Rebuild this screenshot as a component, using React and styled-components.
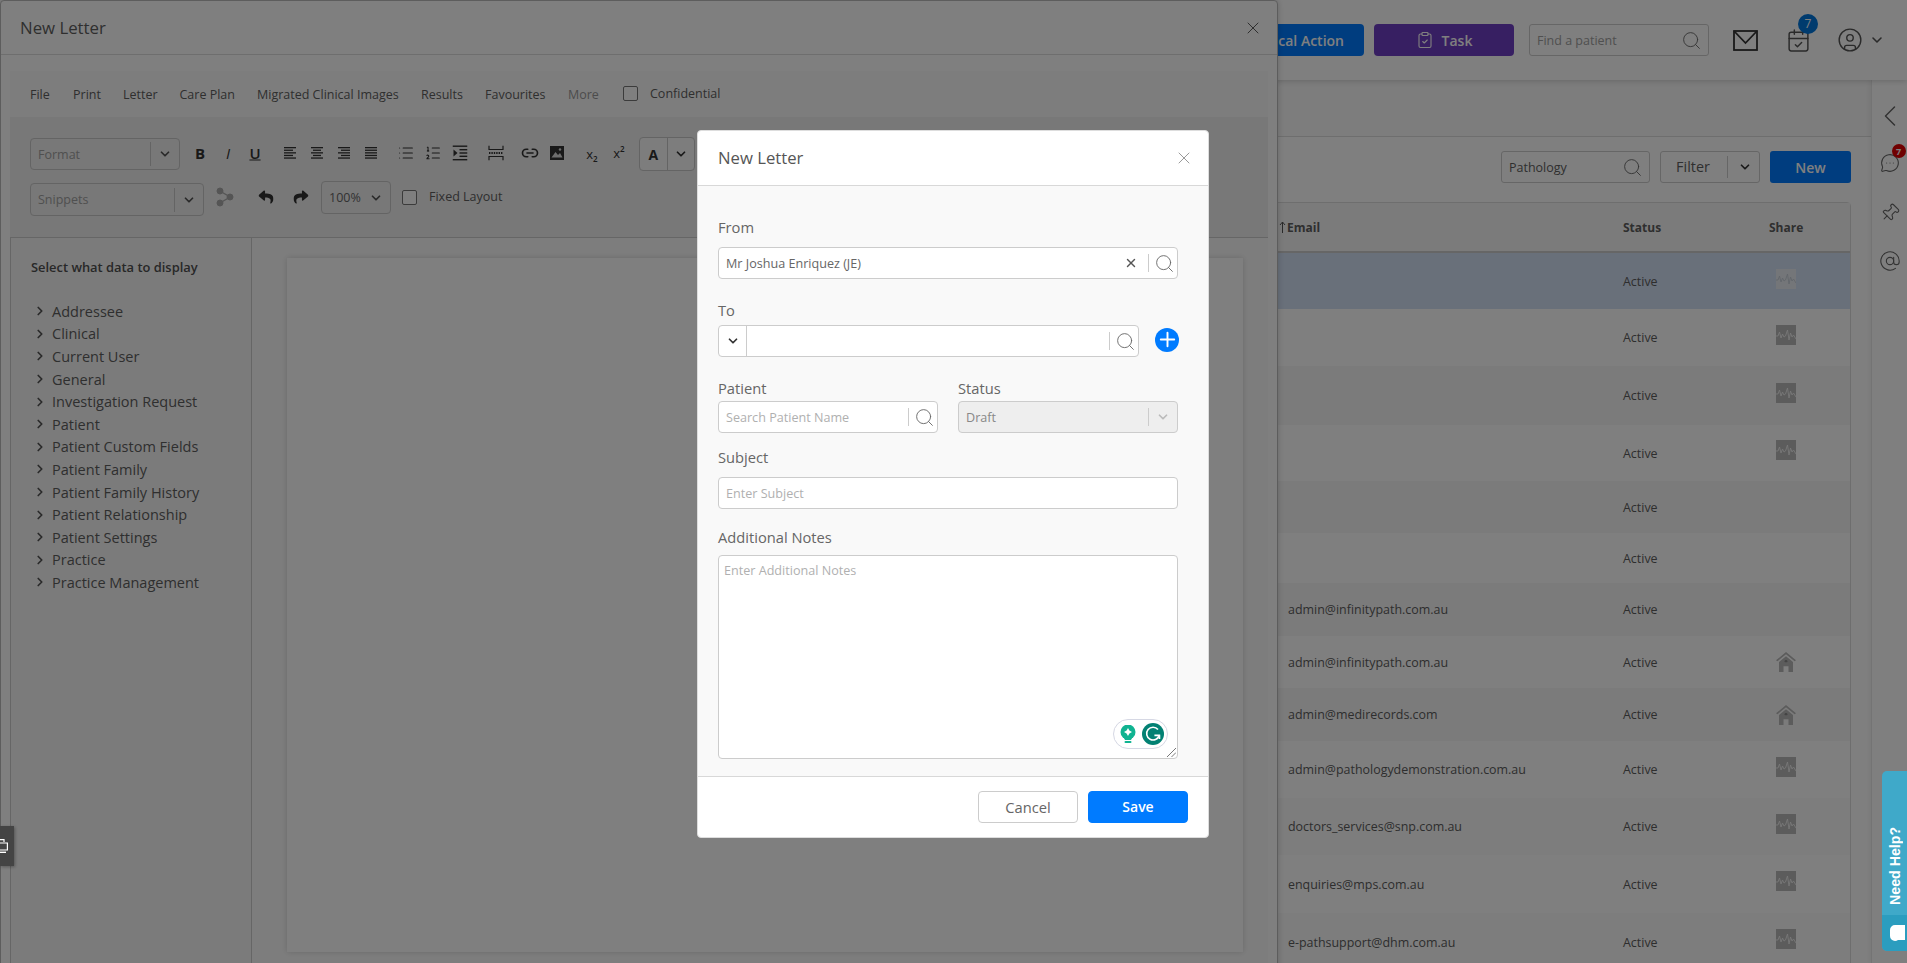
import React from 'react';
import styled, { createGlobalStyle } from 'styled-components';
import {
  Search, X, ChevronDown, ChevronRight, ChevronLeft, List, ListOrdered, Link2, Plus,
  ClipboardCheck, CalendarCheck, CircleUser, MessageCircleMore, Pin, AtSign,
} from 'lucide-react';
import { FaReply, FaShare } from 'react-icons/fa';

const GlobalStyle = createGlobalStyle`
  html, body { margin: 0; padding: 0; }
  body { font-family: "Open Sans", "Noto Sans", sans-serif; color: #666; }
  * { box-sizing: border-box; }
`;

const Page = styled.div`
  position: relative;
  width: 1907px;
  height: 963px;
  overflow: hidden;
  background: #fff;
`;

/* ---------- page behind the dialogs ---------- */
const TopBar = styled.div`
  position: absolute;
  top: 0;
  left: 0;
  right: 0;
  height: 80px;
  display: flex;
  align-items: center;
  padding-left: 1224px;
  background: #fff;
  box-shadow: 0 1px 6px rgba(0, 0, 0, 0.18);
  z-index: 2;
`;

const TopButton = styled.div`
  width: 140px;
  height: 32px;
  margin-left: ${(p) => p.$ml || 0}px;
  display: flex;
  align-items: center;
  justify-content: ${(p) => (p.$end ? 'flex-end' : 'center')};
  gap: 8px;
  padding-right: ${(p) => (p.$end ? 20 : 0)}px;
  border-radius: 4px;
  background: ${(p) => p.$bg};
  color: #fff;
  font-size: 14px;
  font-weight: 600;
`;

const FindBox = styled.div`
  width: ${(p) => p.$w}px;
  height: 32px;
  margin-left: ${(p) => p.$ml || 0}px;
  display: flex;
  align-items: center;
  justify-content: space-between;
  padding: 0 6px 0 7px;
  border: 1px solid #ccc;
  border-radius: 3px;
  background: #fff;
  font-size: 12.5px;
  color: ${(p) => p.$color || '#a0a0a0'};
`;

const TopIcon = styled.div`
  position: relative;
  display: flex;
  margin-left: ${(p) => p.$ml}px;
  color: #555;
`;

const CountBadge = styled.span`
  position: absolute;
  top: -14px;
  left: 12px;
  width: 20px;
  height: 20px;
  display: flex;
  align-items: center;
  justify-content: center;
  border-radius: 50%;
  background: #0076dd;
  color: #fff;
  font-size: 12px;
`;

const SubBar = styled.div`
  position: absolute;
  top: 80px;
  left: 0;
  width: 1871px;
  height: 57px;
  border-bottom: 1px solid #ddd;
  background: #fafafa;
`;

const SideRail = styled.div`
  position: absolute;
  top: 80px;
  right: 0;
  bottom: 0;
  width: 36px;
  display: flex;
  flex-direction: column;
  align-items: center;
  padding-top: 18px;
  background: #fff;
  border-left: 1px solid #e8e8e8;
  box-shadow: -2px 0 4px rgba(0, 0, 0, 0.05);
  color: #666;
`;

const RailIcon = styled.div`
  position: relative;
  display: flex;
  margin-top: ${(p) => p.$mt}px;
`;

const PinGlyph = styled(Pin)`
  transform: rotate(45deg);
`;

const RailBadge = styled.span`
  position: absolute;
  top: -9px;
  right: -6px;
  width: 14px;
  height: 14px;
  display: flex;
  align-items: center;
  justify-content: center;
  border-radius: 50%;
  background: #e00000;
  color: #fff;
  font-size: 9px;
  font-weight: 700;
`;

const ListActions = styled.div`
  position: absolute;
  top: 151px;
  left: 1501px;
  display: flex;
  height: 32px;
`;

const FilterButton = styled.div`
  width: 100px;
  height: 32px;
  margin-left: 10px;
  display: flex;
  align-items: center;
  border: 1px solid #ccc;
  border-radius: 3px;
  background: #fff;
  color: #5e5e5e;
  font-size: 14.4px;
  font-weight: 500;
`;

const FilterLabel = styled.span`
  width: 67px;
  height: 22px;
  line-height: 22px;
  text-align: center;
  border-right: 1px solid #ccc;
  padding-right: 2px;
  flex: none;
  margin-right: 2px;
`;

const FilterCaret = styled.span`
  flex: 1;
  display: flex;
  justify-content: center;
  color: #333;
`;

const NewButton = styled.div`
  width: 81px;
  margin-left: 10px;
  display: flex;
  align-items: center;
  justify-content: center;
  border-radius: 3px;
  background: #007bff;
  color: #fff;
  font-size: 14px;
  font-weight: 600;
`;

const Table = styled.div`
  position: absolute;
  top: 202px;
  left: 1100px;
  width: 751px;
  height: 780px;
  border: 1px solid #ddd;
  border-radius: 4px 4px 0 0;
  background: #fff;
`;

const Row = styled.div`
  display: grid;
  grid-template-columns: 522px 146px 1fr;
  align-items: center;
  height: ${(p) => p.$h}px;
  background: ${(p) => p.$bg || '#fff'};
  font-size: 12.45px;
  color: #5c5c5c;
`;

const HeaderRow = styled(Row)`
  border-bottom: 2px solid #ccc;
  font-size: 12px;
  font-weight: 700;
  background: #f7f7f7;
  color: #5e5e5e;
`;

const EmailCell = styled.div`
  padding-left: ${(p) => p.$pad || 187}px;
  display: flex;
  align-items: center;
  gap: 1px;
`;

const ShareCell = styled.div`
  display: flex;
  padding-left: 7px;
  transform: translateY(${(p) => p.$dy || 0}px);
`;

/* ---------- big New Letter dialog ---------- */
const LetterDialog = styled.div`
  position: absolute;
  top: 0;
  left: 0;
  width: 1278px;
  height: 980px;
  border: 1px solid #bbb;
  border-radius: 4px;
  background: #fff;
  box-shadow: 0 0 6px rgba(0, 0, 0, 0.2);
  z-index: 5;
`;

const DialogHeader = styled.div`
  height: 54px;
  display: flex;
  align-items: center;
  justify-content: space-between;
  padding: 0 14px 0 19px;
  border-bottom: 1px solid #ddd;
  font-size: 16.8px;
  color: #5e5e5e;
`;

const MenuBar = styled.div`
  position: absolute;
  top: 70px;
  left: 9px;
  width: 1258px;
  height: 46px;
  background: #fbfbfb;
  display: flex;
  align-items: center;
  font-size: 12.5px;
  color: #5e5e5e;
`;

const MenuItem = styled.span`
  position: absolute;
  left: ${(p) => p.$x - 10}px;
  margin-top: ${(p) => p.$dy || 0}px;
  color: ${(p) => (p.$muted ? '#999' : 'inherit')};
`;

const Box = styled.span`
  position: absolute;
  left: ${(p) => p.$x}px;
  top: ${(p) => p.$y}px;
  width: 15px;
  height: 15px;
  border: 1px solid #777;
  border-radius: 2px;
  background: #fff;
`;

const Toolbar = styled.div`
  position: absolute;
  top: 116px;
  left: 9px;
  width: 1258px;
  height: 120px;
  background: #f0f0f0;
`;

const ToolSelect = styled.div`
  position: absolute;
  left: ${(p) => p.$x - 10}px;
  top: ${(p) => p.$y}px;
  width: ${(p) => p.$w}px;
  height: ${(p) => p.$h}px;
  display: flex;
  align-items: center;
  justify-content: space-between;
  border: 1px solid #c8c8c8;
  border-radius: 4px;
  padding-left: 7px;
  font-size: 12.5px;
  color: ${(p) => p.$color || '#a0a0a0'};
`;

const CaretPart = styled.span`
  width: 29px;
  height: 24px;
  display: flex;
  align-items: center;
  justify-content: center;
  border-left: ${(p) => (p.$plain ? '0' : '1px solid #c8c8c8')};
  color: #555;
`;

const ToolIcon = styled.span`
  position: absolute;
  left: ${(p) => p.$x - 10}px;
  top: ${(p) => p.$y}px;
  transform: translate(-50%, -50%);
  display: flex;
  color: ${(p) => p.$color || '#333'};
  font-size: ${(p) => p.$size || 15}px;
  font-weight: ${(p) => p.$weight || 400};
  font-style: ${(p) => (p.$italic ? 'italic' : 'normal')};
  text-decoration: ${(p) => (p.$under ? 'underline' : 'none')};
  font-family: "Open Sans", sans-serif;
  line-height: 1;
  sub, sup { font-size: 8px; font-weight: 600; line-height: 0; }
`;

const ColorGroup = styled.div`
  position: absolute;
  left: 629px;
  top: 20px;
  width: 56px;
  height: 34px;
  display: flex;
  border: 1px solid #c8c8c8;
  border-radius: 4px;
  background: #fafafa;
`;

const ColorPart = styled.span`
  flex: 1;
  display: flex;
  align-items: center;
  justify-content: center;
  font-size: 14px;
  font-weight: 700;
  color: #333;
  border-right: ${(p) => (p.$split ? '1px solid #c8c8c8' : '0')};
`;

const FixedLabel = styled.span`
  position: absolute;
  left: 419px;
  top: 71px;
  font-size: 12.5px;
  line-height: 18px;
  color: #5e5e5e;
`;

const DataPanel = styled.div`
  position: absolute;
  top: 236px;
  left: 9px;
  width: 242px;
  height: 740px;
  border: 1px solid #ccc;
  border-width: 1px 1px 0 1px;
  background: #f7f7f7;
  padding: 20px 0 0 20px;
`;

const PanelTitle = styled.div`
  font-size: 12.9px;
  font-weight: 600;
  line-height: 18px;
  margin-bottom: 24px;
  color: #505050;
`;

const TreeRow = styled.div`
  display: flex;
  align-items: center;
  height: 22.6px;
  padding-left: 2px;
  gap: 5px;
  font-size: 14.5px;
  color: #5e5e5e;
`;

const EditorArea = styled.div`
  position: absolute;
  top: 236px;
  left: 251px;
  width: 1016px;
  height: 740px;
  border-top: 1px solid #ccc;
  background: #fbfbfb;
`;

const EditorPaper = styled.div`
  position: absolute;
  top: 20px;
  left: 35px;
  width: 956px;
  height: 694px;
  background: #fff;
  box-shadow: 0 0 6px rgba(0, 0, 0, 0.16);
`;

const Overlay = styled.div`
  position: absolute;
  inset: 0;
  background: rgba(0, 0, 0, 0.5);
  z-index: 10;
`;

/* ---------- small modal ---------- */
const Modal = styled.div`
  position: absolute;
  top: 130px;
  left: 697px;
  width: 512px;
  height: 708px;
  display: flex;
  flex-direction: column;
  border-radius: 4px;
  border: 1px solid #ddd;
  background: #fff;
  overflow: hidden;
  z-index: 20;
`;

const ModalHeader = styled.div`
  height: 55px;
  flex: none;
  display: flex;
  align-items: center;
  justify-content: space-between;
  padding: 0 14px 1px 20px;
  border-bottom: 1px solid #d8d8d8;
  font-size: 16.7px;
  color: #555;
`;

const ModalBody = styled.div`
  height: 591px;
  flex: none;
  padding: 32px 0 0 20px;
  background: #f9f9f9;
  border-bottom: 1px solid #d8d8d8;
`;

const Label = styled.div`
  height: 20px;
  line-height: 18px;
  margin-top: ${(p) => p.$mt || 0}px;
  font-size: 14.7px;
  color: #666;
`;

const Field = styled.div`
  position: relative;
  width: ${(p) => p.$w || 460}px;
  height: ${(p) => p.$h || 32}px;
  margin-top: ${(p) => p.$mt || 0}px;
  display: flex;
  align-items: center;
  padding-left: 7px;
  border: 1px solid #ccc;
  border-radius: 4px;
  background: ${(p) => (p.$off ? '#eee' : '#fff')};
  font-size: 12.6px;
  color: ${(p) => (p.$off ? '#888' : '#666')};
`;

const Placeholder = styled.span`
  color: #b0b0b0;
`;

const FieldEnd = styled.div`
  position: absolute;
  right: 0;
  top: 0;
  bottom: 0;
  display: flex;
  align-items: center;
`;

const Divide = styled.span`
  width: 29px;
  height: 18px;
  display: flex;
  align-items: center;
  justify-content: center;
  padding-left: ${(p) => (p.$color ? 0 : 3)}px;
  border-left: 1px solid #ccc;
  color: ${(p) => p.$color || '#666'};
`;

const ClearMark = styled.span`
  width: 28px;
  margin-right: 3px;
  display: flex;
  justify-content: center;
  color: #555;
`;

const ToPicker = styled.div`
  width: 28px;
  height: 100%;
  margin-left: -7px;
  display: flex;
  align-items: center;
  justify-content: center;
  border-right: 1px solid #ccc;
  color: #333;
`;

const ToRow = styled.div`
  display: flex;
  align-items: center;
  margin-top: 4px;
`;

const AddCircle = styled.span`
  width: 24px;
  height: 24px;
  margin: 0 0 3px 16px;
  display: flex;
  align-items: center;
  justify-content: center;
  border-radius: 50%;
  background: #007bff;
  color: #fff;
`;

const TwoCols = styled.div`
  display: flex;
  gap: 20px;
  margin-top: 22px;
`;

const NotesHint = styled.span`
  position: absolute;
  left: 5px;
  top: 6px;
  line-height: 18px;
  color: #b0b0b0;
`;

const GrammarlyPill = styled.div`
  position: absolute;
  right: 9px;
  bottom: 9px;
  width: 55px;
  height: 30px;
  display: flex;
  align-items: center;
  justify-content: space-between;
  padding: 0 3px 0 6px;
  border: 1px solid #d6d8e4;
  border-radius: 15px;
  background: #fff;
`;

const Grip = styled.svg`
  position: absolute;
  right: 1px;
  bottom: 1px;
`;

const ModalFooter = styled.div`
  flex: 1;
  display: flex;
  align-items: center;
  justify-content: flex-end;
  gap: 10px;
  padding: 0 20px 1px 0;
`;

const FootButton = styled.div`
  width: 100px;
  height: 32px;
  display: flex;
  align-items: center;
  justify-content: center;
  border-radius: 4px;
  border: 1px solid ${(p) => (p.$primary ? '#007bff' : '#ccc')};
  background: ${(p) => (p.$primary ? '#007bff' : '#fff')};
  color: ${(p) => (p.$primary ? '#fff' : '#666')};
  font-size: ${(p) => (p.$primary ? 14 : 14.7)}px;
  font-weight: ${(p) => (p.$primary ? 600 : 400)};
`;

/* ---------- floating widgets ---------- */
const HelpTab = styled.div`
  position: absolute;
  top: 771px;
  left: 1882px;
  width: 25px;
  height: 180px;
  display: flex;
  flex-direction: column;
  border-radius: 5px 0 0 5px;
  overflow: hidden;
  background: #3fa9c9;
  z-index: 20;
`;

const HelpText = styled.div`
  height: 144px;
  display: flex;
  align-items: center;
  justify-content: flex-start;
  padding-top: 10px;
  writing-mode: vertical-rl;
  transform: rotate(180deg);
  color: #fff;
  font-family: "Liberation Sans", sans-serif;
  font-size: 14.2px;
  font-weight: 700;
`;

const HelpBubble = styled.div`
  flex: 1;
  display: flex;
  align-items: center;
  padding-left: 8px;
  background: #2b9dbf;
`;

const DeviceTab = styled.div`
  position: absolute;
  top: 826px;
  left: 0;
  width: 14px;
  height: 40px;
  display: flex;
  align-items: center;
  overflow: hidden;
  background: #444;
  box-shadow: 1px 1px 3px rgba(0, 0, 0, 0.3);
  z-index: 20;
`;

/* ---------- drawn icons ---------- */
const Lines = ({ widths, aligned = 'left' }) => (
  <svg width="14" height="14" viewBox="0 0 14 14">
    {widths.map((w, i) => {
      const x = aligned === 'left' ? 1 : aligned === 'right' ? 13 - w : 7 - w / 2;
      return <rect key={i} x={x} y={1 + i * 2.6} width={w} height="1.3" fill="currentColor" />;
    })}
  </svg>
);

const IndentIcon = () => (
  <svg width="15" height="16" viewBox="0 0 15 16" fill="currentColor">
    <rect x="0" y="0.5" width="15" height="1.4" />
    <rect x="7" y="4" width="8" height="1.4" />
    <rect x="7" y="7.3" width="8" height="1.4" />
    <rect x="7" y="10.6" width="8" height="1.4" />
    <rect x="0" y="14" width="15" height="1.4" />
    <path d="M1 4.5 L5 8 L1 11.5 Z" />
  </svg>
);

const PageBreakIcon = () => (
  <svg width="16" height="15" viewBox="0 0 16 15" fill="none" stroke="currentColor" strokeWidth="1.2">
    <path d="M1 0 V4 H15 V0" />
    <path d="M1 15 V11 H15 V15" />
    <path d="M1 7.5 H15" strokeDasharray="1.4 1" strokeWidth="1.8" />
  </svg>
);

const PictureIcon = () => (
  <svg width="15" height="15" viewBox="0 0 15 15">
    <rect x="0.5" y="0.5" width="14" height="14" fill="currentColor" />
    <path d="M2 12 L6 6.5 L8.5 9.5 L10.5 7.5 L13 12 Z" fill="#ddd" />
    <circle cx="10.5" cy="4" r="1.2" fill="#ddd" />
  </svg>
);

const NodesIcon = () => (
  <svg width="18" height="20" viewBox="0 0 18 20" fill="#aaa" stroke="#aaa">
    <circle cx="4" cy="4" r="3" />
    <circle cx="4" cy="16" r="3" />
    <circle cx="14" cy="10" r="3" />
    <path d="M4 4 L14 10 L4 16" fill="none" strokeWidth="1.4" />
  </svg>
);

const MailIcon = () => (
  <svg width="25" height="21" viewBox="0 0 25 21" fill="none" stroke="#333" strokeWidth="1.8">
    <rect x="1" y="1" width="23" height="19" />
    <path d="M1 1 L12.5 13 L24 1" />
  </svg>
);

const PulseIcon = ({ bg = '#b8b8b8', line = '#f0f0f0' }) => (
  <svg width="20" height="20" viewBox="0 0 20 20">
    <rect width="20" height="20" fill={bg} />
    <path d="M0 11 H2 L3.5 7 L5 13 L6.5 9 L8 12 L9.5 11 L11.5 5 L13 15 L14.5 8 L16 12 L17.5 10 L20 14" fill="none" stroke={line} strokeWidth="0.9" />
  </svg>
);

const HouseIcon = () => (
  <svg width="20" height="20" viewBox="0 0 20 24" preserveAspectRatio="none" fill="#b8b8b8">
    <path d="M10 0 L20 10 L18.6 11.2 L10 2.8 L1.4 11.2 L0 10 Z" />
    <path d="M3 12 L10 5 L17 12 V24 H12.5 V17 H7.5 V24 H3 Z" />
    <circle cx="10" cy="11" r="1.4" fill="#888" />
  </svg>
);

const BulbIcon = () => (
  <svg width="16" height="18" viewBox="0 0 16 18">
    <circle cx="8" cy="7" r="7.5" fill="#10b391" />
    <path d="M3.5 12 H12.5 L11 15 H5 Z" fill="#10b391" />
    <rect x="4.5" y="16" width="7" height="2" rx="1" fill="#10b391" />
    <path d="M8 3 L9.4 5.6 L12 7 L9.4 8.4 L8 11 L6.6 8.4 L4 7 L6.6 5.6 Z" fill="#fff" />
  </svg>
);

const GrammarlyIcon = () => (
  <svg width="22" height="22" viewBox="0 0 22 22">
    <circle cx="11" cy="11" r="11" fill="#028173" />
    <path d="M16 6.5 A6.4 6.4 0 1 0 17.2 12.4 H12.4" fill="none" stroke="#fff" strokeWidth="1.6" />
    <path d="M17.5 12.2 V16" fill="none" stroke="#fff" strokeWidth="1.6" />
  </svg>
);

const BubbleIcon = () => (
  <svg width="15" height="17" viewBox="0 0 15 17" fill="#fff">
    <path d="M5 0 H15 V15 H8 A5 5 0 0 1 5 16 A5 5 0 0 1 0 11 V5 A5 5 0 0 1 5 0 Z" />
  </svg>
);

const SortArrow = () => (
  <svg width="7" height="12" viewBox="0 0 7 12" fill="none" stroke="#555" strokeWidth="1">
    <path d="M3.5 12 V1 M1 4 L3.5 1 L6 4" />
  </svg>
);

const DeviceIcon = () => (
  <svg width="8" height="14" viewBox="0 0 8 14" fill="none" stroke="#fff" strokeWidth="1.2">
    <path d="M0 0.6 H4 V3" />
    <path d="M0 4 H7.4 V11 H0" />
    <path d="M0 13.4 H6" strokeWidth="1.6" />
  </svg>
);

const menuItems = [
  ['File', 30], ['Print', 73], ['Letter', 123], ['Care Plan', 179.5],
  ['Migrated Clinical Images', 257], ['Results', 421], ['Favourites', 485],
];

const treeItems = [
  'Addressee', 'Clinical', 'Current User', 'General', 'Investigation Request', 'Patient',
  'Patient Custom Fields', 'Patient Family', 'Patient Family History', 'Patient Relationship',
  'Patient Settings', 'Practice', 'Practice Management',
];

const rows = [
  { h: 56, email: '', share: 'pulse-light', bg: '#d2e0f5', dy: -2 },
  { h: 57, email: '', share: 'pulse', dy: -3 },
  { h: 59, email: '', share: 'pulse', bg: '#f7f7f7', dy: -3 },
  { h: 56, email: '', share: 'pulse', dy: -3 },
  { h: 52, email: '', bg: '#f7f7f7' },
  { h: 50, email: '' },
  { h: 53, email: 'admin@infinitypath.com.au', bg: '#f7f7f7' },
  { h: 52, email: 'admin@infinitypath.com.au', share: 'house' },
  { h: 53, email: 'admin@medirecords.com', bg: '#f7f7f7', share: 'house' },
  { h: 57, email: 'admin@pathologydemonstration.com.au', share: 'pulse', dy: -3 },
  { h: 57, email: 'doctors_services@snp.com.au', share: 'pulse', bg: '#fafafa', dy: -3 },
  { h: 58, email: 'enquiries@mps.com.au', share: 'pulse', dy: -3 },
  { h: 58, email: 'e-pathsupport@dhm.com.au', share: 'pulse', bg: '#fafafa', dy: -3 },
];

const ShareIcon = ({ kind }) => {
  if (kind === 'house') return <HouseIcon />;
  if (kind === 'pulse') return <PulseIcon />;
  if (kind === 'pulse-light') return <PulseIcon bg="#e8edf3" line="#c4ccd6" />;
  return null;
};

const FieldSearch = () => <Search size={21} strokeWidth={1.05} />;

const App = () => (
  <Page>
    <GlobalStyle />

    <TopBar>
      <TopButton $bg="#007bff" $end>Clinical Action</TopButton>
      <TopButton $bg="#6f3fc4" $ml={10}><ClipboardCheck size={18} strokeWidth={1.5} />Task</TopButton>
      <FindBox $w={180} $ml={15}>Find a patient<Search size={21} strokeWidth={1.05} color="#666" /></FindBox>
      <TopIcon $ml={24}><MailIcon /></TopIcon>
      <TopIcon $ml={28}>
        <CalendarCheck size={25} strokeWidth={1.4} />
        <CountBadge>7</CountBadge>
      </TopIcon>
      <TopIcon $ml={26}><CircleUser size={26} strokeWidth={1.3} /></TopIcon>
      <TopIcon $ml={6}><ChevronDown size={16} strokeWidth={2.4} /></TopIcon>
    </TopBar>

    <SubBar />

    <SideRail>
      <RailIcon $mt={0}><ChevronLeft size={36} strokeWidth={1} /></RailIcon>
      <RailIcon $mt={19}>
        <MessageCircleMore size={20} strokeWidth={1.3} />
        <RailBadge>7</RailBadge>
      </RailIcon>
      <RailIcon $mt={30}><PinGlyph size={20} strokeWidth={1.3} /></RailIcon>
      <RailIcon $mt={27}><AtSign size={22} strokeWidth={1.2} /></RailIcon>
    </SideRail>

    <ListActions>
      <FindBox $w={149} $color="#5e5e5e">Pathology<Search size={21} strokeWidth={1.05} color="#666" /></FindBox>
      <FilterButton>
        <FilterLabel>Filter</FilterLabel>
        <FilterCaret><ChevronDown size={14} strokeWidth={3} /></FilterCaret>
      </FilterButton>
      <NewButton>New</NewButton>
    </ListActions>

    <Table>
      <HeaderRow $h={50}>
        <EmailCell $pad={178}><SortArrow />Email</EmailCell>
        <div>Status</div>
        <div>Share</div>
      </HeaderRow>
      {rows.map((row, i) => (
        <Row key={i} $h={row.h} $bg={row.bg}>
          <EmailCell>{row.email}</EmailCell>
          <div>Active</div>
          <ShareCell $dy={row.dy}><ShareIcon kind={row.share} /></ShareCell>
        </Row>
      ))}
    </Table>

    <LetterDialog>
      <DialogHeader>
        <span>New Letter</span>
        <X size={20} strokeWidth={1.2} />
      </DialogHeader>
      <MenuBar>
        {menuItems.map(([name, x]) => <MenuItem key={name} $x={x}>{name}</MenuItem>)}
        <MenuItem $x={568} $muted>More</MenuItem>
        <Box $x={613} $y={15} />
        <MenuItem $x={650} $dy={-2}>Confidential</MenuItem>
      </MenuBar>
      <Toolbar>
        <ToolSelect $x={30} $y={21} $w={150} $h={32}>Format<CaretPart><ChevronDown size={14} strokeWidth={3} /></CaretPart></ToolSelect>
        <ToolIcon $x={200} $y={36} $weight={700}>B</ToolIcon>
        <ToolIcon $x={228} $y={36} $italic>I</ToolIcon>
        <ToolIcon $x={255} $y={36} $weight={600} $under>U</ToolIcon>
        <ToolIcon $x={290} $y={36}><Lines widths={[12, 9, 12, 9, 12]} /></ToolIcon>
        <ToolIcon $x={317} $y={36}><Lines widths={[12, 8, 12, 8, 12]} aligned="center" /></ToolIcon>
        <ToolIcon $x={344} $y={36}><Lines widths={[12, 9, 12, 9, 12]} aligned="right" /></ToolIcon>
        <ToolIcon $x={371} $y={36}><Lines widths={[12, 12, 12, 12, 12]} /></ToolIcon>
        <ToolIcon $x={406} $y={36}><List size={17} strokeWidth={1.5} /></ToolIcon>
        <ToolIcon $x={433} $y={36}><ListOrdered size={17} strokeWidth={1.5} /></ToolIcon>
        <ToolIcon $x={460} $y={36}><IndentIcon /></ToolIcon>
        <ToolIcon $x={495.5} $y={36}><PageBreakIcon /></ToolIcon>
        <ToolIcon $x={529.5} $y={36}><Link2 size={18} strokeWidth={2.2} /></ToolIcon>
        <ToolIcon $x={557} $y={36}><PictureIcon /></ToolIcon>
        <ToolIcon $x={592} $y={37} $size={13}><span>x<sub>2</sub></span></ToolIcon>
        <ToolIcon $x={619} $y={36} $size={13}><span>x<sup>2</sup></span></ToolIcon>
        <ColorGroup>
          <ColorPart $split>A</ColorPart>
          <ColorPart><ChevronDown size={14} strokeWidth={3} /></ColorPart>
        </ColorGroup>

        <ToolSelect $x={30} $y={66} $w={174} $h={33}>Snippets<CaretPart><ChevronDown size={14} strokeWidth={3} /></CaretPart></ToolSelect>
        <ToolIcon $x={225} $y={80}><NodesIcon /></ToolIcon>
        <ToolIcon $x={266} $y={80} $size={15}><FaReply /></ToolIcon>
        <ToolIcon $x={301} $y={80} $size={15}><FaShare /></ToolIcon>
        <ToolSelect $x={321} $y={64} $w={70} $h={33} $color="#666">100%<CaretPart $plain><ChevronDown size={14} strokeWidth={3} /></CaretPart></ToolSelect>
        <Box $x={392} $y={73} />
        <FixedLabel>Fixed Layout</FixedLabel>
      </Toolbar>
      <DataPanel>
        <PanelTitle>Select what data to display</PanelTitle>
        {treeItems.map((item) => (
          <TreeRow key={item}>
            <ChevronRight size={14} strokeWidth={3} color="#555" />
            {item}
          </TreeRow>
        ))}
      </DataPanel>
      <EditorArea>
        <EditorPaper />
      </EditorArea>
    </LetterDialog>

    <Overlay />

    <DeviceTab><DeviceIcon /></DeviceTab>

    <Modal>
      <ModalHeader>
        <span>New Letter</span>
        <X size={20} strokeWidth={1.2} color="#999" />
      </ModalHeader>
      <ModalBody>
        <Label>From</Label>
        <Field $mt={9}>
          Mr Joshua Enriquez (JE)
          <FieldEnd>
            <ClearMark><X size={14} strokeWidth={2.5} /></ClearMark>
            <Divide><FieldSearch /></Divide>
          </FieldEnd>
        </Field>

        <Label $mt={22}>To</Label>
        <ToRow>
          <Field $w={421}>
            <ToPicker><ChevronDown size={14} strokeWidth={3} /></ToPicker>
            <FieldEnd><Divide><FieldSearch /></Divide></FieldEnd>
          </Field>
          <AddCircle><Plus size={23} strokeWidth={2} /></AddCircle>
        </ToRow>

        <TwoCols>
          <div>
            <Label>Patient</Label>
            <Field $w={220} $mt={2}>
              <Placeholder>Search Patient Name</Placeholder>
              <FieldEnd><Divide><FieldSearch /></Divide></FieldEnd>
            </Field>
          </div>
          <div>
            <Label>Status</Label>
            <Field $w={220} $mt={2} $off>
              Draft
              <FieldEnd><Divide $color="#bbb"><ChevronDown size={14} strokeWidth={3} /></Divide></FieldEnd>
            </Field>
          </div>
        </TwoCols>

        <Label $mt={15}>Subject</Label>
        <Field $mt={9}><Placeholder>Enter Subject</Placeholder></Field>

        <Label $mt={19}>Additional Notes</Label>
        <Field $mt={7} $h={204}>
          <NotesHint>Enter Additional Notes</NotesHint>
          <GrammarlyPill><BulbIcon /><GrammarlyIcon /></GrammarlyPill>
          <Grip width="9" height="9" viewBox="0 0 9 9" stroke="#555" strokeWidth="0.8">
            <path d="M0 9 L9 0 M4.5 9 L9 4.5" />
          </Grip>
        </Field>
      </ModalBody>
      <ModalFooter>
        <FootButton>Cancel</FootButton>
        <FootButton $primary>Save</FootButton>
      </ModalFooter>
    </Modal>

    <HelpTab>
      <HelpText>Need Help?</HelpText>
      <HelpBubble><BubbleIcon /></HelpBubble>
    </HelpTab>
  </Page>
);

export default App;
